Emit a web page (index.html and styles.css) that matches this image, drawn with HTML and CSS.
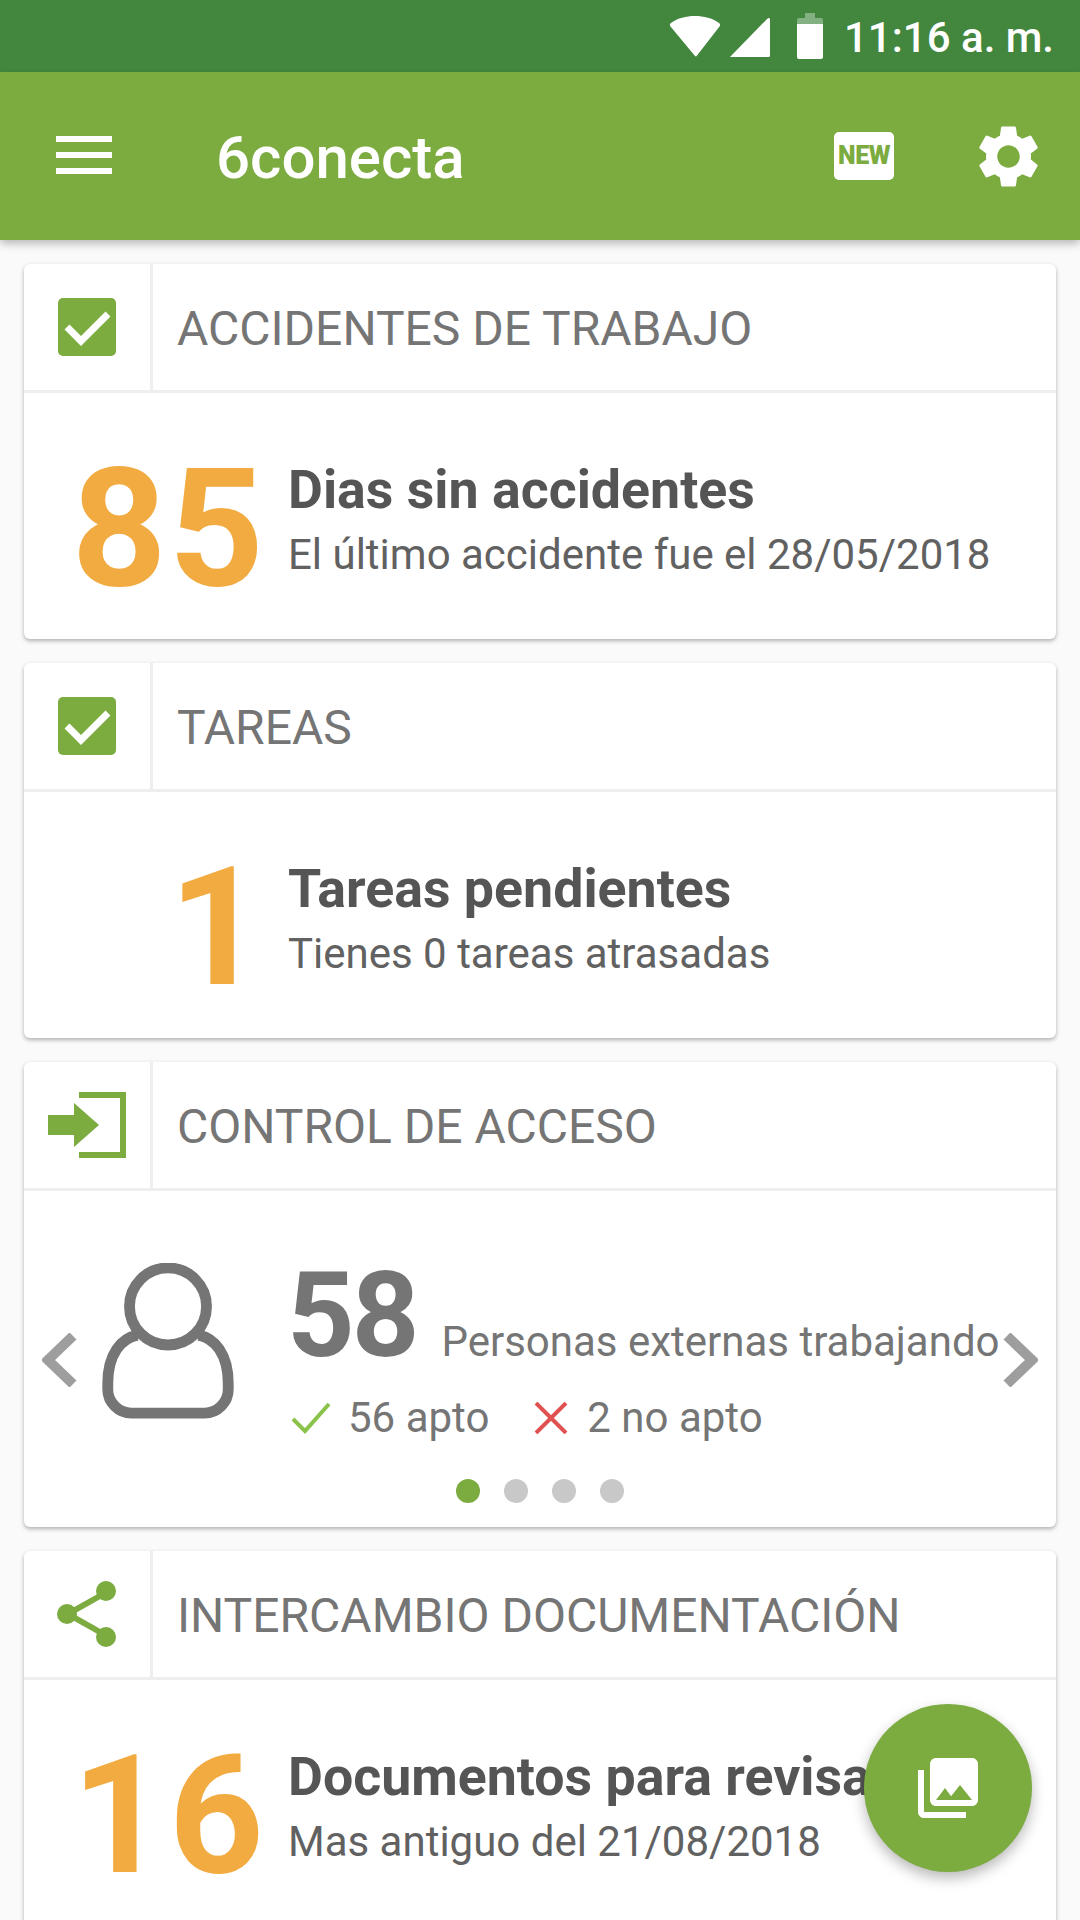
FILE: index.html
```html
<!DOCTYPE html>
<html lang="es">
<head>
<meta charset="utf-8">
<title>6conecta</title>
<link rel="stylesheet" href="styles.css">
</head>
<body>
<div class="phone">
  <div class="status">
    <svg class="st-wifi" viewBox="0 0 52 42"><path d="M26 41 1.500 11.500Q0 9.500 2 8C9 3 17 1 26 1s17 2 24 7q2 1.500.5 3.500L28 40.500q-1 1.500-2 .5z"/></svg>
    <svg class="st-signal" viewBox="0 0 42 42"><path d="M1 41 39 2q2-2 3 0v38q0 1-2 1z"/></svg>
    <svg class="st-batt" viewBox="0 0 26 46"><path class="st-batt-top" d="M8 0h10v5h6q2 0 2 2v6H0V7q0-2 2-2h6z"/><path d="M0 11h26v33q0 2-2 2H2q-2 0-2-2z"/></svg>
    <span class="st-time">11:16 a. m.</span>
  </div>
  <header class="appbar">
    <div class="burger"><i></i><i></i><i></i></div>
    <div class="app-title">6conecta</div>
    <div class="new-badge">NEW</div>
    <svg class="gear" viewBox="0 0 24 24"><path d="M19.140 12.940c.04-.3.06-.61.06-.94 0-.32-.02-.64-.07-.94l2.030-1.580a.49.49 0 0 0 .12-.61l-1.920-3.320a.488.488 0 0 0-.59-.22l-2.390.96c-.5-.38-1.030-.7-1.620-.94l-.36-2.540a.484.484 0 0 0-.48-.41h-3.840c-.24 0-.43.17-.47.41l-.36 2.540c-.59.24-1.130.57-1.620.94l-2.390-.96c-.22-.08-.47 0-.59.22L2.740 8.870c-.12.21-.08.47.12.61l2.030 1.580c-.05.3-.09.63-.09.94s.02.64.07.94l-2.030 1.580a.49.49 0 0 0-.12.61l1.920 3.320c.12.22.37.29.59.22l2.390-.96c.5.38 1.030.7 1.620.94l.36 2.540c.05.24.24.41.48.41h3.840c.24 0 .44-.17.47-.41l.36-2.540c.59-.24 1.130-.56 1.620-.94l2.390.96c.22.08.47 0 .59-.22l1.920-3.320c.12-.22.07-.47-.12-.61l-2.010-1.580zM12 15.600c-1.980 0-3.600-1.620-3.600-3.600s1.620-3.600 3.600-3.600 3.600 1.620 3.600 3.600-1.620 3.600-3.600 3.600z"/></svg>
  </header>

  <main class="cards">
    <section class="card">
      <div class="card-head">
        <div class="head-icon"><svg class="ic-check" viewBox="0 0 58 58"><rect width="58" height="58" rx="5"/><path class="ic-check-mark" d="M9 29l14 14 27-27"/></svg></div>
        <h2 class="head-title">ACCIDENTES DE TRABAJO</h2>
      </div>
      <div class="stat-body">
        <div class="big-num">85</div>
        <div class="stat-text">
          <div class="stat-title">Dias sin accidentes</div>
          <div class="stat-sub">El último accidente fue el 28/05/2018</div>
        </div>
      </div>
    </section>

    <section class="card">
      <div class="card-head">
        <div class="head-icon"><svg class="ic-check" viewBox="0 0 58 58"><rect width="58" height="58" rx="5"/><path class="ic-check-mark" d="M9 29l14 14 27-27"/></svg></div>
        <h2 class="head-title">TAREAS</h2>
      </div>
      <div class="stat-body">
        <div class="big-num">1</div>
        <div class="stat-text">
          <div class="stat-title">Tareas pendientes</div>
          <div class="stat-sub">Tienes 0 tareas atrasadas</div>
        </div>
      </div>
    </section>

    <section class="card">
      <div class="card-head">
        <div class="head-icon"><svg class="ic-login" viewBox="0 0 78 66"><path d="M31 0h47v66H31v-6h41V6H31z"/><path d="M0 23h26V11l25 22-25 22V43H0z"/></svg></div>
        <h2 class="head-title">CONTROL DE ACCESO</h2>
      </div>
      <div class="access-body">
        <div class="access-row">
          <svg class="chev chev-left" viewBox="0 0 36 54"><path d="M31 3 6 27l25 24"/></svg>
          <svg class="person" viewBox="0 0 134 158"><circle cx="67" cy="44" r="39"/><path d="M36 73C20 76 6 92 6 122v6c0 13 11 24 24 24h74c13 0 24-11 24-24v-6c0-30-14-46-30-49"/></svg>
          <div class="access-info">
            <div class="access-top"><span class="access-num">58</span><span class="access-label">Personas externas trabajando</span></div>
            <div class="access-meta">
              <svg class="m-ok" viewBox="0 0 40 32"><path d="M2 17l12 12L38 2"/></svg><span class="m-text m-first">56 apto</span>
              <svg class="m-no" viewBox="0 0 34 32"><path d="M2 1l30 30M32 1 2 31"/></svg><span class="m-text m-last">2 no apto</span>
            </div>
          </div>
          <svg class="chev chev-right" viewBox="0 0 36 54"><path d="M5 3l25 24L5 51"/></svg>
        </div>
        <div class="dots"><i class="dot on"></i><i class="dot"></i><i class="dot"></i><i class="dot"></i></div>
      </div>
    </section>

    <section class="card">
      <div class="card-head">
        <div class="head-icon"><svg class="ic-share" viewBox="0 0 60 66"><path d="M50 11 11 33l39 22"/><circle cx="49" cy="10" r="10"/><circle cx="10" cy="33" r="10"/><circle cx="49" cy="56" r="10"/></svg></div>
        <h2 class="head-title">INTERCAMBIO DOCUMENTACIÓN</h2>
      </div>
      <div class="stat-body">
        <div class="big-num">16</div>
        <div class="stat-text">
          <div class="stat-title">Documentos para revisar</div>
          <div class="stat-sub">Mas antiguo del 21/08/2018</div>
        </div>
      </div>
    </section>
  </main>

  <button class="fab"><svg viewBox="2 2 20 20"><path d="M22 16V4c0-1.100-.9-2-2-2H8c-1.100 0-2 .9-2 2v12c0 1.100.9 2 2 2h12c1.100 0 2-.9 2-2zm-11-4 2.030 2.710L16 11l4 5H8l3-4zM2 6v14c0 1.100.9 2 2 2h14v-2H4V6H2z"/></svg></button>
</div>
</body>
</html>
```

FILE: styles.css
```css
* { box-sizing: border-box; }
html, body { margin: 0; padding: 0; }
body { background: #fafafa; font-family: Roboto, "Liberation Sans", sans-serif; }
.phone { position: relative; width: 1080px; height: 1920px; overflow: hidden; background: #fafafa; }

.status { height: 72px; background: #43873e; display: flex; align-items: center; justify-content: flex-end; padding: 0 26px 0 0; color: #fff; }
.status svg { fill: #fff; display: block; flex: none; }
.st-wifi { width: 52px; height: 42px; margin-top: -1px; }
.st-signal { width: 41px; height: 41px; margin-left: 8px; margin-top: 3px; }
.st-batt { width: 26px; height: 46px; margin-left: 27px; }
.st-batt-top { opacity: .35; }
.st-time { font-size: 42px; font-weight: 500; margin-left: 21px; margin-top: 3px; white-space: nowrap; }

.appbar { position: relative; z-index: 2; height: 168px; background: #7cab40; display: flex; align-items: center; box-shadow: 0 4px 8px rgba(0,0,0,.25); padding-left: 56px; color: #fff; }
.burger { width: 56px; display: flex; flex-direction: column; gap: 10px; margin-top: -2px; }
.burger i { display: block; height: 6px; background: #fff; }
.app-title { font-size: 60px; font-weight: 500; margin-left: 104px; margin-top: 2px; flex: 1; }
.new-badge { width: 60px; height: 48px; background: #fff; border-radius: 5px; color: #7cab40; font-size: 25px; font-weight: 900; text-align: center; line-height: 48px; letter-spacing: -.5px; }
.gear { width: 75px; height: 75px; fill: #fff; margin: 0 34px 0 77px; }

.cards { display: flex; flex-direction: column; gap: 24px; padding: 24px 24px 0; }
.card { flex: none; background: #fff; border-radius: 6px; box-shadow: 0 2px 4px rgba(0,0,0,.3); }

.card-head { height: 129px; display: flex; align-items: stretch; border-bottom: 3px solid #eeeeee; }
.head-icon { width: 129px; border-right: 3px solid #eeeeee; display: flex; align-items: center; justify-content: center; padding-right: 1px; }
.head-title { margin: 0; padding: 3px 0 0 24px; align-self: center; font-size: 48px; font-weight: 400; color: #757575; white-space: nowrap; }

.ic-check { width: 58px; height: 58px; }
.ic-check rect { fill: #7cab40; }
.ic-check-mark { fill: none; stroke: #fff; stroke-width: 7; }
.ic-login { width: 78px; height: 66px; fill: #7cab40; margin-left: 1px; }
.ic-share { width: 60px; height: 66px; fill: #7cab40; stroke: none; }
.ic-share path { fill: none; stroke: #7cab40; stroke-width: 6; }

.stat-body { height: 246px; display: flex; align-items: center; }
.big-num { width: 242px; text-align: right; font-size: 166px; font-weight: 700; color: #f2ab41; line-height: 1; letter-spacing: 2px; flex: none; margin-top: 25px; }
.stat-text { margin-left: 22px; white-space: nowrap; margin-top: 8px; }
.stat-title { font-size: 53.7px; font-weight: 700; color: #555; line-height: 70px; }
.stat-sub { font-size: 42px; color: #616161; line-height: 60px; }

.access-body { height: 336px; display: flex; flex-direction: column; }
.access-row { display: flex; align-items: flex-start; padding: 72px 0 0 18px; flex: 1; white-space: nowrap; }
.chev { width: 36px; height: 54px; fill: none; stroke: #9e9e9e; stroke-width: 10; flex: none; }
.chev-left { margin-top: 70px; }
.chev-right { margin-top: 70px; }
.person { width: 134px; height: 156px; fill: none; stroke: #757575; stroke-width: 11; margin-left: 23px; flex: none; }
.access-info { margin-left: 52px; margin-top: 3px; width: 715px; flex: none; }
.access-top { display: flex; align-items: baseline; }
.access-num { font-size: 118px; font-weight: 700; color: #757575; line-height: 100px; letter-spacing: -3px; }
.access-label { font-size: 42px; color: #757575; margin-left: 25px; }
.access-meta { display: flex; align-items: center; margin-top: 27px; font-size: 42px; color: #757575; }
.m-ok { width: 40px; height: 32px; fill: none; stroke: #8bc34a; stroke-width: 4; margin-left: 4px; }
.m-no { width: 34px; height: 32px; fill: none; stroke: #e05252; stroke-width: 4; }
.m-text { margin-left: 17px; }
.m-first { margin-right: 45px; }
.m-last { margin-left: 19px; }
.dots { display: flex; justify-content: center; gap: 24px; padding-bottom: 24px; }
.dot { width: 24px; height: 24px; border-radius: 50%; background: #c8c8c8; }
.dot.on { background: #7cab40; }

.fab { position: absolute; left: 864px; top: 1704px; width: 168px; height: 168px; border-radius: 50%; border: 0; padding: 0; background: #7cab40; box-shadow: 0 6px 14px rgba(0,0,0,.28); display: flex; align-items: center; justify-content: center; }
.fab svg { width: 60px; height: 60px; fill: #fff; display: block; }
```
